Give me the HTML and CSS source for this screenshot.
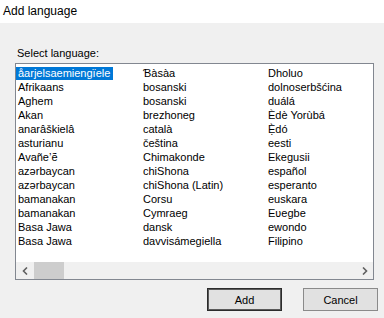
FILE: index.html
```html
<!DOCTYPE html>
<html lang="en">
<head>
    <meta charset="UTF-8">
    <meta name="viewport" content="width=device-width, initial-scale=1.0">
    <title>Add language</title>
    <link rel="stylesheet" href="styles.css">
</head>
<body>
    <div class="window">
        <header class="title-bar">Add language</header>

        <div class="content">
            <label class="field-label">Select language:</label>

            <div class="listbox">
                <ul class="items">
                    <li class="item selected"><span>åarjelsaemiengïele</span></li>
                    <li class="item"><span>Afrikaans</span></li>
                    <li class="item"><span>Aghem</span></li>
                    <li class="item"><span>Akan</span></li>
                    <li class="item"><span>anarâškielâ</span></li>
                    <li class="item"><span>asturianu</span></li>
                    <li class="item"><span>Avañe’ẽ</span></li>
                    <li class="item"><span>azərbaycan</span></li>
                    <li class="item"><span>azərbaycan</span></li>
                    <li class="item"><span>bamanakan</span></li>
                    <li class="item"><span>bamanakan</span></li>
                    <li class="item"><span>Basa Jawa</span></li>
                    <li class="item"><span>Basa Jawa</span></li>

                    <li class="item"><span>Ɓàsàa</span></li>
                    <li class="item"><span>bosanski</span></li>
                    <li class="item"><span>bosanski</span></li>
                    <li class="item"><span>brezhoneg</span></li>
                    <li class="item"><span>català</span></li>
                    <li class="item"><span>čeština</span></li>
                    <li class="item"><span>Chimakonde</span></li>
                    <li class="item"><span>chiShona</span></li>
                    <li class="item"><span>chiShona (Latin)</span></li>
                    <li class="item"><span>Corsu</span></li>
                    <li class="item"><span>Cymraeg</span></li>
                    <li class="item"><span>dansk</span></li>
                    <li class="item"><span>davvisámegiella</span></li>

                    <li class="item"><span>Dholuo</span></li>
                    <li class="item"><span>dolnoserbšćina</span></li>
                    <li class="item"><span>duálá</span></li>
                    <li class="item"><span>Èdè Yorùbá</span></li>
                    <li class="item"><span>Ẹ̀dó</span></li>
                    <li class="item"><span>eesti</span></li>
                    <li class="item"><span>Ekegusii</span></li>
                    <li class="item"><span>español</span></li>
                    <li class="item"><span>esperanto</span></li>
                    <li class="item"><span>euskara</span></li>
                    <li class="item"><span>Eʋegbe</span></li>
                    <li class="item"><span>ewondo</span></li>
                    <li class="item"><span>Filipino</span></li>
                </ul>

                <div class="hscroll">
                    <div class="scroll-btn">
                        <svg width="6" height="8" viewBox="0 0 6 8"><path d="M5 0.5 L1.5 4 L5 7.5" fill="none" stroke="#606060" stroke-width="1.6"/></svg>
                    </div>
                    <div class="scroll-thumb"></div>
                    <div class="scroll-track"></div>
                    <div class="scroll-btn">
                        <svg width="6" height="8" viewBox="0 0 6 8"><path d="M1 0.5 L4.5 4 L1 7.5" fill="none" stroke="#606060" stroke-width="1.6"/></svg>
                    </div>
                </div>
            </div>
        </div>

        <div class="actions">
            <button class="btn btn-default">Add</button>
            <button class="btn">Cancel</button>
        </div>
    </div>
</body>
</html>
```

FILE: styles.css
```css
* {
    margin: 0;
    padding: 0;
    box-sizing: border-box;
    font-family: "Liberation Sans", Arial, sans-serif;
}

body {
    background-color: #f0f0f0;
    color: #000;
}

.window {
    width: 384px;
    height: 318px;
    display: flex;
    flex-direction: column;
}

.title-bar {
    height: 23px;
    line-height: 23px;
    padding-left: 3px;
    background-color: #ffffff;
    font-size: 12px;
}

.content {
    padding: 0 10px 0 15px;
}

.field-label {
    display: block;
    margin-top: 23px;
    margin-bottom: 3px;
    font-size: 11px;
    line-height: 14px;
    padding-left: 2px;
}

.listbox {
    height: 217px;
    border: 1px solid #828790;
    background-color: #ffffff;
    display: flex;
    flex-direction: column;
}

.items {
    flex: 1;
    list-style: none;
    padding-top: 2px;
    overflow: hidden;
    display: grid;
    grid-auto-flow: column;
    grid-template-rows: repeat(13, 14px);
    grid-auto-columns: 125px;
    align-content: start;
}

.item {
    font-size: 11px;
    line-height: 14px;
    white-space: nowrap;
}

.item span {
    display: inline-block;
    padding: 0 2px;
}

.item.selected span {
    background-color: #0078d7;
    color: #ffffff;
    line-height: 13px;
    margin-top: 1px;
    padding-right: 3px;
}

.hscroll {
    height: 17px;
    display: flex;
    background-color: #f0f0f0;
}

.scroll-btn {
    width: 17px;
    display: flex;
    align-items: center;
    justify-content: center;
}

.scroll-thumb {
    width: 30px;
    margin-left: 1px;
    background-color: #cdcdcd;
}

.scroll-track {
    flex: 1;
}

.actions {
    display: flex;
    justify-content: flex-end;
    gap: 21px;
    padding: 8px 6px 0 0;
}

.btn {
    width: 75px;
    height: 23px;
    background-color: #e1e1e1;
    border: 1px solid #8a8a8a;
    font-size: 11px;
    color: #000;
}

.btn-default {
    border: 1px solid #2b2b2b;
    box-shadow: inset 0 0 0 1px #5a5a5a;
}
```
